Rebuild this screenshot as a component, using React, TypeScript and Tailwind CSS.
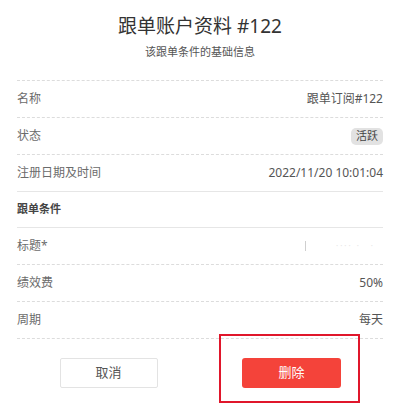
import React from "react";

const font = { fontFamily: '"Noto Sans", "Noto Sans CJK SC", sans-serif' };

function Row({ label, children, last }: { label: string; children: React.ReactNode; last?: "solid" | "dashed" }) {
  return (
    <div
      className={`flex items-center justify-between h-[37px] border-b ${
        last === "solid" ? "border-solid border-[#e6e6e6]" : "border-dashed border-[#dcdcdc]"
      }`}
    >
      <span className="text-[12px] text-[#6b6b6b]">{label}</span>
      <div className="text-[12px] text-[#555]">{children}</div>
    </div>
  );
}

export default function App() {
  return (
    <div className="relative w-[400px] h-[406px] bg-white overflow-hidden" style={font}>
      <div className="px-[17px]">
        <div className="pt-[14px] text-center">
          <div className="text-[19px] leading-[24px] text-[#333]">跟单账户资料 #122</div>
          <div className="mt-[7px] text-[11px] leading-[14px] text-[#555]">该跟单条件的基础信息</div>
        </div>
        <div className="mt-[21px] border-t border-dashed border-[#dcdcdc]">
          <Row label="名称">跟单订阅#122</Row>
          <Row label="状态">
            <span className="inline-flex items-center justify-center h-[17px] px-[5px] rounded-[5px] bg-[#e2e2e2] text-[11px] text-[#444]">
              活跃
            </span>
          </Row>
          <Row label="注册日期及时间" last="solid">
            2022/11/20 10:01:04
          </Row>
          <div className="flex items-center h-[36px] border-b border-[#e6e6e6]">
            <span className="text-[11px] font-semibold text-[#444]">跟单条件</span>
          </div>
          <Row label="标题*">
            <div className="flex items-center gap-[30px] mr-[8px]">
              <span className="block w-px h-[10px] bg-[#cfcfcf]" />
              <span className="text-[8px] text-[#e6e6e6] tracking-[2px]">
                ···· ·<span className="ml-[10px]">·</span>
              </span>
            </div>
          </Row>
          <Row label="绩效费">50%</Row>
          <Row label="周期">每天</Row>
        </div>
        <div className="grid grid-cols-2 mt-[19px]">
          <div className="flex justify-center">
            <button className="w-[98px] h-[30px] border border-[#e3e3e3] rounded-[2px] bg-white text-[13px] text-[#555]">
              取消
            </button>
          </div>
          <div className="flex justify-center">
            <button className="w-[99px] h-[30px] rounded-[3px] bg-[#f4433a] text-[13px] text-white">删除</button>
          </div>
        </div>
      </div>
      <div className="absolute left-[219px] top-[334px] w-[141px] h-[69px] border-2 border-[#e0162b]" />
    </div>
  );
}
